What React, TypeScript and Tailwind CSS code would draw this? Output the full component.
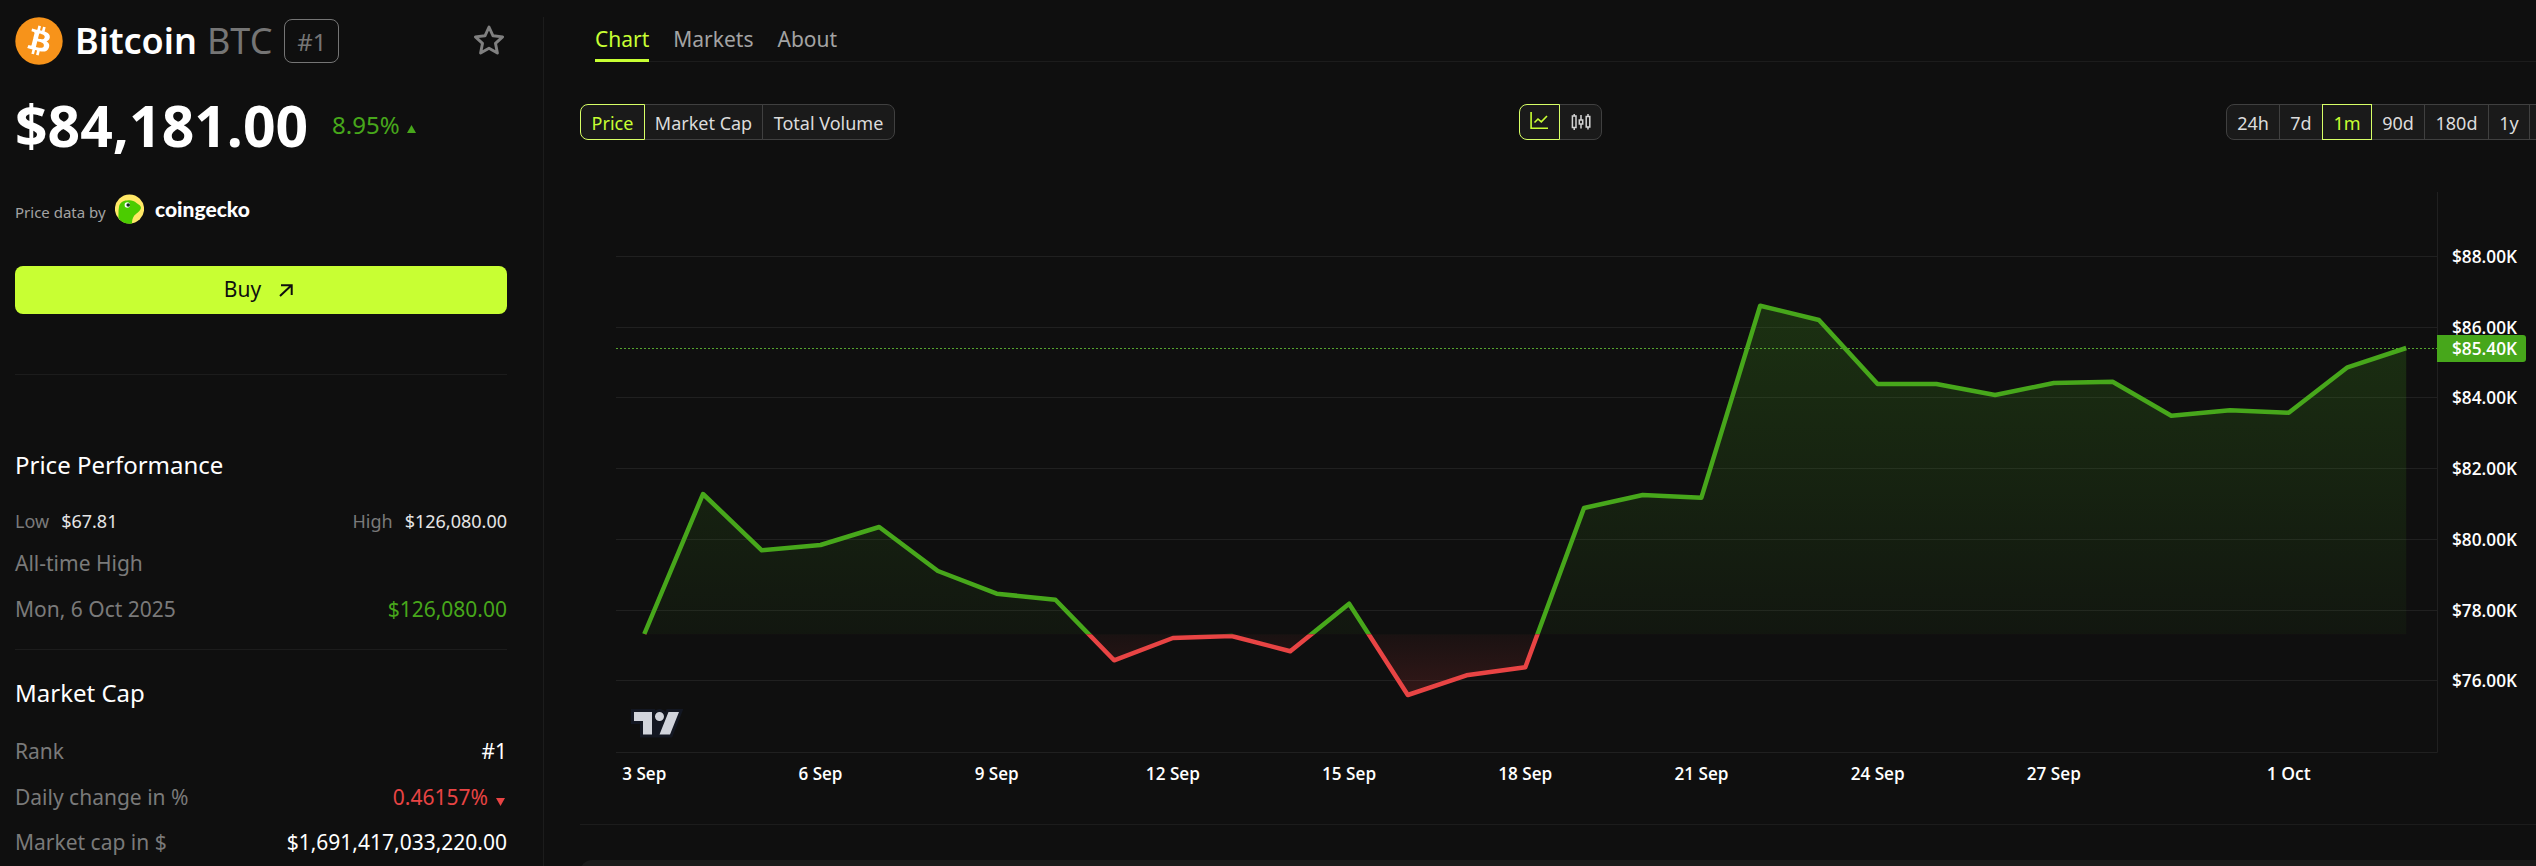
import React from "react";

const UP = "#47a71b";
const DOWN = "#e84444";

const days = [
  634, 494, 550.3, 545, 527, 571, 593.7, 599.7, 660.3, 638, 636, 651.3, 603.7, 695, 675.3, 667.3,
  508, 495, 497.7, 305.7, 320, 384, 384, 395, 383, 381.7, 415.7, 410.3, 412.7, 367.3, 348,
];
const BASE = 634.3;
const LEFT = 616;
const TOP = 192;
const points = days.map((y, i) => [644.3 + i * 58.73 - LEFT, y - TOP] as const);
const line = points.map(([x, y], i) => `${i ? "L" : "M"}${x.toFixed(1)} ${y.toFixed(1)}`).join("");
const base = BASE - TOP;
const area = `${line}L${points[30][0]} ${base}L${points[0][0]} ${base}Z`;

const priceTicks = [
  { label: "$88.00K", y: 64.5 },
  { label: "$86.00K", y: 135.5 },
  { label: "$84.00K", y: 205.5 },
  { label: "$82.00K", y: 276.5 },
  { label: "$80.00K", y: 347.5 },
  { label: "$78.00K", y: 418.5 },
  { label: "$76.00K", y: 488.5 },
];
const dateTicks = [
  { label: "3 Sep", i: 0 },
  { label: "6 Sep", i: 3 },
  { label: "9 Sep", i: 6 },
  { label: "12 Sep", i: 9 },
  { label: "15 Sep", i: 12 },
  { label: "18 Sep", i: 15 },
  { label: "21 Sep", i: 18 },
  { label: "24 Sep", i: 21 },
  { label: "27 Sep", i: 24 },
  { label: "1 Oct", i: 28 },
];

function BitcoinLogo() {
  return (
    <svg className="size-12 shrink-0" viewBox="0 0 32 32">
      <circle cx="16" cy="16" r="15.800" fill="#f7931a" />
      <path
        fill="#fff"
        transform="translate(0 -.3)"
        d="M23.189 14.02c.314-2.096-1.283-3.223-3.465-3.975l.708-2.84-1.728-.43-.69 2.765c-.454-.114-.92-.22-1.385-.326l.695-2.783L15.596 6l-.708 2.839c-.376-.086-.746-.17-1.104-.26l.002-.009-2.384-.595-.46 1.846s1.283.294 1.256.312c.7.175.826.638.805 1.006l-.806 3.235c.048.012.11.03.18.057l-.183-.045-1.13 4.532c-.086.212-.303.531-.793.41.018.025-1.256-.313-1.256-.313l-.858 1.978 2.25.561c.418.105.828.215 1.231.318l-.715 2.872 1.727.43.708-2.84c.472.127.93.245 1.378.357l-.706 2.828 1.728.43.715-2.866c2.948.558 5.164.333 6.097-2.333.752-2.146-.037-3.385-1.588-4.192 1.13-.26 1.98-1.003 2.207-2.538zm-3.95 5.538c-.533 2.147-4.148.986-5.32.695l.95-3.805c1.172.293 4.929.872 4.37 3.11zm.535-5.569c-.487 1.953-3.495.96-4.47.717l.86-3.45c.975.243 4.118.696 3.61 2.733z"
      />
    </svg>
  );
}

function GeckoLogo() {
  return (
    <svg className="h-[30px] w-[29px] shrink-0" viewBox="0 0 29 30" preserveAspectRatio="none">
      <circle cx="14.5" cy="15" r="14.6" fill="#ffe866" />
      <path
        fill="#4bcc00"
        d="M4 13C4.500 9 8 6.500 12 6.600C15 5.800 19 6.500 21.500 9C24 10.500 26 12 26 14C25 17.500 21 19.500 19 22C17.500 24 17 27 17 29.400C11 30.500 6 28 3.500 24C3.500 20 3.300 16 4 13Z"
      />
      <circle cx="12.300" cy="11" r="2.700" fill="#fff" />
      <circle cx="13.200" cy="11" r="1.800" fill="#17301c" />
    </svg>
  );
}

function Row({ label, children }: { label: string; children?: React.ReactNode }) {
  return (
    <div className="flex h-[45.5px] items-center justify-between text-[21px]">
      <span className="text-[#7a7a7a]">{label}</span>
      {children}
    </div>
  );
}

function Sidebar() {
  return (
    <aside className="flex h-full w-[544px] shrink-0 flex-col pl-[15px] pt-[17px]">
      <div className="flex w-[492px] flex-col">
        <div className="flex h-12 items-center">
          <BitcoinLogo />
          <span className="ml-3 text-[36px] font-semibold leading-none text-white">Bitcoin</span>
          <span className="ml-[10px] text-[36px] leading-none text-[#757575]">BTC</span>
          <span className="ml-3 flex h-11 w-[55px] items-center justify-center rounded-lg border border-[#757575] pt-[2px] text-2xl leading-none text-[#757575]">
            #1
          </span>
          <svg className="mb-[2px] ml-auto mr-[2px] size-8" viewBox="0 0 32 32" fill="none" stroke="#808080" strokeWidth="2.900" strokeLinejoin="round">
            <path d="M16 3L20 11.800L29.600 12.900L22.500 19.400L24.400 29L16 24.200L7.600 29L9.500 19.400L2.400 12.900L12 11.800Z" />
          </svg>
        </div>

        <div className="mt-[19px] flex h-[82px] items-center">
          <span className="text-[57px] font-bold leading-none text-white">$84,181.00</span>
          <span className="ml-6 text-2xl leading-none text-[#47a71b]">8.95%</span>
          <svg className="ml-[7px] mt-[8px] h-2 w-[9px]" viewBox="0 0 9 8"><path d="M4.500 0L9 8H0Z" fill={UP} /></svg>
        </div>

        <div className="mt-[23px] flex h-10 items-center">
          <span className="mt-[6px] w-[91px] whitespace-nowrap text-[15px] leading-none text-[#a3a3a3]">Price data by</span>
          <span className="ml-[9px]"><GeckoLogo /></span>
          <span className="mb-[2px] ml-[11px] font-[Lato] text-[21px] font-black leading-none text-white">coingecko</span>
        </div>

        <button className="mt-[37px] flex h-12 items-center justify-center rounded-lg bg-[#c8ff33] pr-[5px] text-[21px] text-[#0f0f0f]">
          Buy
          <svg className="ml-[18px] h-[13px] w-[14px]" viewBox="0 0 14 13" fill="none" stroke="#0f0f0f" strokeWidth="2">
            <path d="M1 12L12.500 1.200M2 1.200H12.700V11" />
          </svg>
        </button>
        <hr className="mt-15 border-[#1c1c1c]" />

        <h2 className="mt-[72px] text-2xl leading-9 text-white">Price Performance</h2>
        <div className="mb-[2px] mt-5 flex h-9 items-center justify-between text-[18px]">
          <span className="flex gap-3 text-[#e5e5e5]"><span className="text-[#7a7a7a]">Low</span>$67.81</span>
          <span className="flex gap-3 text-[#e5e5e5]"><span className="text-[#7a7a7a]">High</span>$126,080.00</span>
        </div>
        <Row label="All-time High" />
        <Row label="Mon, 6 Oct 2025"><span className="text-[#47a71b]">$126,080.00</span></Row>
        <hr className="mt-[17px] border-[#1c1c1c]" />
        <h2 className="mt-[25px] text-2xl leading-9 text-white">Market Cap</h2>
        <div className="mt-[18px]">
          <Row label="Rank"><span className="text-white">#1</span></Row>
          <Row label="Daily change in %">
            <span className="flex items-center gap-2 pr-[2px] pt-px text-[#e84444]">
              0.46157%
              <svg className="mt-[9px] h-2 w-[9px]" viewBox="0 0 9 8"><path d="M0 0H9L4.500 8Z" fill={DOWN} /></svg>
            </span>
          </Row>
          <Row label="Market cap in $"><span className="text-white">$1,691,417,033,220.00</span></Row>
        </div>
      </div>
    </aside>
  );
}

const segment = "flex h-9 items-center justify-center border border-[#404040] bg-[#1a1a1a] pt-[2px] text-[18px] text-[#dcdcdc]";
const active = "flex h-9 items-center justify-center border border-[#d7ff66] bg-[#1a1a1a] pt-[2px] text-[18px] text-[#c8ff33] z-10";

function Toolbar() {
  return (
    <div className="mt-[42px] flex h-9 pl-[36px]">
      <div className="flex">
        <div className={`${active} w-[65px] rounded-l-lg`}>Price</div>
        <div className={`${segment} -ml-px w-[119px]`}>Market Cap</div>
        <div className={`${segment} -ml-px w-[133px] rounded-r-lg`}>Total Volume</div>
      </div>
      <div className="ml-[624px] flex">
        <div className={`${active} w-[41px] rounded-l-lg`}>
          <svg className="mb-1 mr-[2px] size-[18px]" viewBox="0 0 18 18" fill="none" stroke="#c8ff33" strokeWidth="1.600">
            <path d="M1.100 0V16.200H18M4.500 10.500L8 7L11.300 9.800L17 4" />
          </svg>
        </div>
        <div className={`${segment} -ml-px w-[43px] rounded-r-lg`}>
          <svg className="mb-[2px] h-[18px] w-5" viewBox="0 0 20 18" fill="none" stroke="#d4d4d4" strokeWidth="1.500">
            <path d="M1.400 3H5V14.500H1.400ZM8.300 7H11.700V11H8.300ZM15.200 3.500H18.800V14H15.200ZM3.200 1V3M3.200 14.500V17M10 2V7M10 11V15.500M17 1V3.500M17 14V16.500" />
          </svg>
        </div>
      </div>
      <div className="ml-[624px] flex">
        <div className={`${segment} w-[54px] rounded-l-lg`}>24h</div>
        <div className={`${segment} -ml-px w-11`}>7d</div>
        <div className={`${active} -ml-px w-[50px]`}>1m</div>
        <div className={`${segment} -ml-px w-[54px]`}>90d</div>
        <div className={`${segment} -ml-px w-[65px]`}>180d</div>
        <div className={`${segment} -ml-px w-[42px]`}>1y</div>
        <div className={`${segment} -ml-px w-[54px]`} />
      </div>
    </div>
  );
}

function PriceChart() {
  return (
    <svg className="ml-[72px] mt-[52px] h-[600px] w-[1920px] shrink-0" viewBox="0 0 1920 600">
      <defs>
        <linearGradient id="up" gradientUnits="userSpaceOnUse" x1="0" y1="0" x2="0" y2={base}>
          <stop offset="0" stopColor={UP} stopOpacity="0.28" />
          <stop offset="1" stopColor={UP} stopOpacity="0.05" />
        </linearGradient>
        <linearGradient id="down" gradientUnits="userSpaceOnUse" x1="0" y1={base} x2="0" y2="560">
          <stop offset="0" stopColor={DOWN} stopOpacity="0.05" />
          <stop offset="1" stopColor={DOWN} stopOpacity="0.28" />
        </linearGradient>
        <clipPath id="above"><rect x="0" y="0" width="1822" height={base} /></clipPath>
        <clipPath id="below"><rect x="0" y={base} width="1822" height="130" /></clipPath>
      </defs>
      <g stroke="#202020">
        {priceTicks.map((t) => <line key={t.label} x1="0" x2="1821" y1={t.y} y2={t.y} />)}
        <path d="M0 560.500H1821.500V0" fill="none" />
      </g>
      <g clipPath="url(#above)">
        <path d={area} fill="url(#up)" />
        <path d={line} fill="none" stroke={UP} strokeWidth="4.500" strokeLinejoin="round" />
      </g>
      <g clipPath="url(#below)">
        <path d={area} fill="url(#down)" />
        <path d={line} fill="none" stroke={DOWN} strokeWidth="4.500" strokeLinejoin="round" />
      </g>
      <line x1="0" x2="1821" y1="156.500" y2="156.500" stroke="#55a52e" strokeDasharray="2 2" />
      <g transform="translate(15 517) scale(1.5)">
        <path fill="#131722" d="M0 0V10H6V19H27.400L34.900 0H23.700L23 1.900A5 5 0 0 0 16 1V0Z" />
        <path fill="#d1d4dc" d="M14 2H2v6h6v9h6V2Zm12 15h-7l6-15h7l-6 15Zm-7-9a3 3 0 1 0 0-6 3 3 0 0 0 0 6Z" />
      </g>
      <g className="font-['Open_Sans',sans-serif] text-[18px] font-semibold" fill="#fff">
        {priceTicks.map((t) => (
          <text key={t.label} x="1836" y={t.y + 6.5} textLength="65" lengthAdjust="spacingAndGlyphs">{t.label}</text>
        ))}
        {dateTicks.map((t) => (
          <text key={t.label} x={points[t.i][0]} y="588" textAnchor="middle" textLength={t.label.length > 5 ? 54 : 44} lengthAdjust="spacingAndGlyphs">
            {t.label}
          </text>
        ))}
        <path d="M1821 143H1907Q1910 143 1910 146V167Q1910 170 1907 170H1821Z" fill={UP} />
        <text x="1836" y="163" textLength="65" lengthAdjust="spacingAndGlyphs">$85.40K</text>
      </g>
    </svg>
  );
}

export default function App() {
  return (
    <div className="flex h-[866px] w-[2536px] overflow-hidden bg-[#0f0f0f] font-['Noto_Sans',sans-serif]">
      <Sidebar />
      <main className="-ml-px mt-[17px] flex h-[849px] min-w-0 flex-1 flex-col border-l border-[#1c1c1c]">
        <div className="ml-[51px] flex h-[45px] shrink-0 gap-6 border-b border-[#1c1c1c] text-[21px] text-[#a3a3a3]">
          <div className="h-[45px] border-b-[3px] border-[#c8ff33] pt-[6px] leading-[32px] text-[#c8ff33]">Chart</div>
          <div className="pt-[6px] leading-[32px]">Markets</div>
          <div className="pt-[6px] leading-[32px]">About</div>
        </div>
        <Toolbar />
        <PriceChart />
        <hr className="ml-[36px] mt-8 border-[#1c1c1c]" />
        <div className="ml-[36px] mt-[35px] h-[60px] shrink-0 rounded-tl-xl bg-[#1a1a1a]" />
      </main>
    </div>
  );
}
